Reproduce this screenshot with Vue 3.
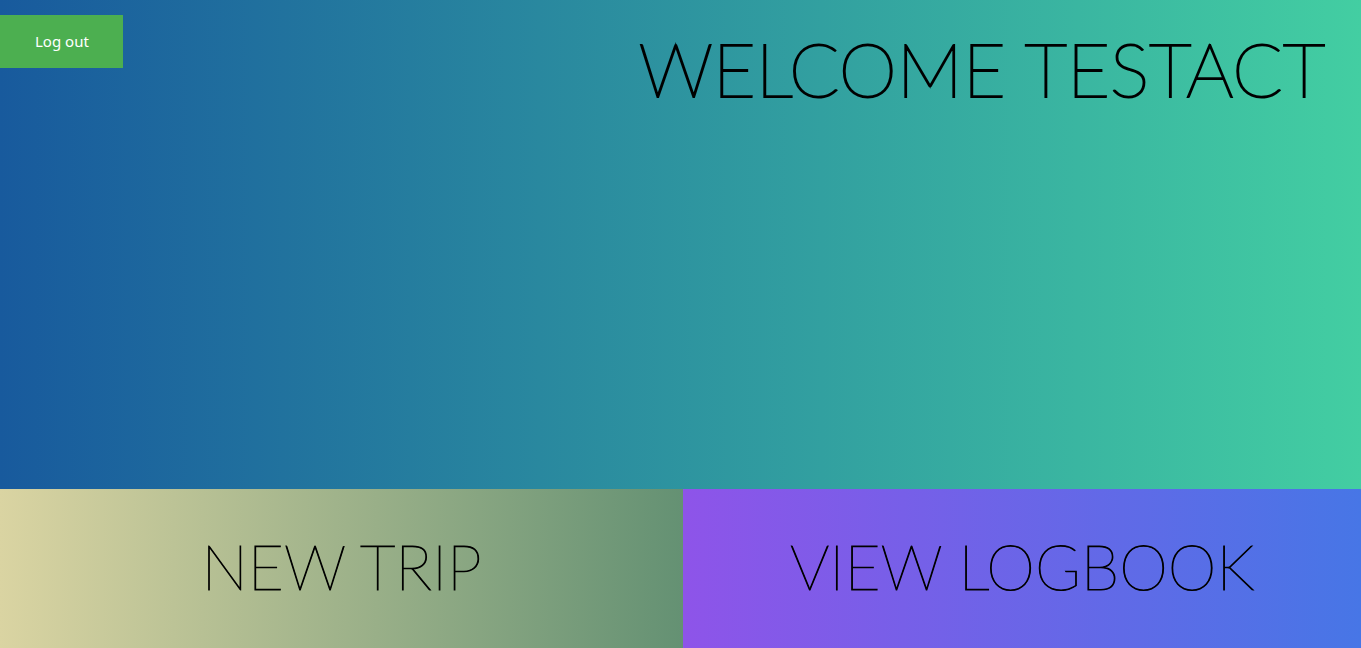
<script setup>
const actions = [
  { label: 'NEW TRIP', kind: 'trip' },
  { label: 'VIEW LOGBOOK', kind: 'logbook' },
]
</script>

<template>
  <div class="page">
    <header class="hero">
      <button type="button" class="logout">Log out</button>
      <h1 class="welcome">WELCOME TESTACT</h1>
    </header>
    <nav class="actions">
      <a v-for="a in actions" :key="a.kind" href="#" class="action" :class="a.kind">{{ a.label }}</a>
    </nav>
  </div>
</template>

<style>
body {
  margin: 0;
}
</style>

<style scoped>
.page {
  display: flex;
  flex-direction: column;
  min-height: 100vh;
  color: #000;
  font-family: Lato, "Open Sans", sans-serif;
  font-weight: 100;
}
.hero {
  flex: 1;
  display: flex;
  justify-content: space-between;
  align-items: flex-start;
  background: linear-gradient(90deg, #185a9d, #43cea2);
}
.logout {
  margin-top: 15px;
  padding: 16px 34px 16px 35px;
  border: 0;
  background: #4caf50;
  color: #fff;
  font: 15px/21px "Noto Sans", sans-serif;
}
.welcome {
  margin: 21px 36px 0 0;
  font-size: 74px;
  line-height: 96px;
  font-weight: 100;
  -webkit-text-stroke: 2px #000;
}
.actions {
  display: grid;
  grid-template-columns: 50.2% 1fr;
}
.action {
  padding: 38px 0 42px;
  text-align: center;
  font-size: 62px;
  line-height: 79px;
  color: #000;
  text-decoration: none;
  -webkit-text-stroke: 1px #000;
}
.trip {
  background: linear-gradient(90deg, #dad4a2, #649173);
}
.logbook {
  background: linear-gradient(90deg, #8e54e9, #4776e6);
}
</style>
